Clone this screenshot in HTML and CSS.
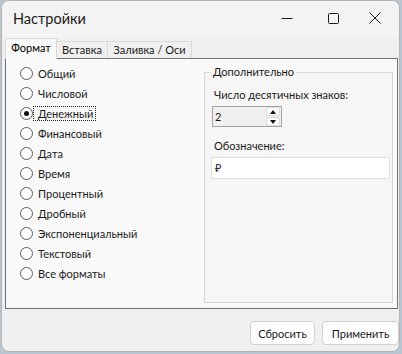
FILE: index.html
```html
<!DOCTYPE html>
<html lang="ru">
<head>
  <meta charset="UTF-8" />
  <title>Настройки</title>
  <link rel="stylesheet" href="styles.css">
</head>
<body>
  <div class="window">
    <div class="title-bar">
      <span class="title">Настройки</span>
      <div class="controls">
        <span class="ctl ctl-min">
          <svg width="12" height="12" viewBox="0 0 12 12"><path d="M0.5 6.5h11" stroke="#1a1a1a" stroke-width="1"/></svg>
        </span>
        <span class="ctl ctl-max">
          <svg width="11" height="11" viewBox="0 0 11 11"><rect x="0.5" y="0.5" width="10" height="10" rx="1" fill="none" stroke="#1a1a1a" stroke-width="1"/></svg>
        </span>
        <span class="ctl ctl-close">
          <svg width="12" height="12" viewBox="0 0 12 12"><path d="M0.5 0.5l11 11M11.5 0.5l-11 11" stroke="#1a1a1a" stroke-width="1"/></svg>
        </span>
      </div>
    </div>

    <div class="tabs">
      <div class="tab tab-format active">Формат</div>
      <div class="tab tab-insert">Вставка</div>
      <div class="tab tab-fill">Заливка / Оси</div>
    </div>

    <div class="panel">
      <ul class="formats">
        <li><span class="radio"></span><span class="label">Общий</span></li>
        <li><span class="radio"></span><span class="label">Числовой</span></li>
        <li><span class="radio checked"></span><span class="label focus">Денежный</span></li>
        <li><span class="radio"></span><span class="label">Финансовый</span></li>
        <li><span class="radio"></span><span class="label">Дата</span></li>
        <li><span class="radio"></span><span class="label">Время</span></li>
        <li><span class="radio"></span><span class="label">Процентный</span></li>
        <li><span class="radio"></span><span class="label">Дробный</span></li>
        <li><span class="radio"></span><span class="label">Экспоненциальный</span></li>
        <li><span class="radio"></span><span class="label">Текстовый</span></li>
        <li><span class="radio"></span><span class="label">Все форматы</span></li>
      </ul>

      <fieldset class="extra">
        <legend>Дополнительно</legend>
        <div class="field-label">Число десятичных знаков:</div>
        <div class="spin">
          <span class="spin-value">2</span>
          <span class="spin-buttons">
            <span class="spin-btn"><span class="arrow-up"></span></span>
            <span class="spin-btn"><span class="arrow-down"></span></span>
          </span>
        </div>
        <div class="field-label second">Обозначение:</div>
        <div class="text-box">₽</div>
      </fieldset>
    </div>

    <div class="footer">
      <button class="btn btn-reset">Сбросить</button>
      <button class="btn btn-apply">Применить</button>
    </div>
  </div>
</body>
</html>
```

FILE: styles.css
```css
body {
  margin: 0;
  background-color: #b9c6cf;
  font-family: Lato, "Noto Sans", Arial, sans-serif;
  font-size: 11px;
  color: #1a1a1a;
}

.window {
  margin-left: 1px;
  width: 399px;
  height: 352px;
  box-sizing: border-box;
  border: 1px solid #b4b4b4;
  border-radius: 8px;
  background-color: #f0f0f0;
  overflow: hidden;
}

.title-bar {
  height: 37px;
  box-sizing: border-box;
  padding-bottom: 3px;
  display: flex;
  align-items: center;
  justify-content: space-between;
  background-color: #f3f3f3;
}

.title {
  margin-left: 11px;
  font-size: 14.5px;
  color: #1c1c1c;
}

.controls {
  display: flex;
  height: 100%;
  padding-right: 5px;
}

.ctl {
  display: flex;
  align-items: center;
  justify-content: center;
  width: 46px;
  height: 100%;
}

.ctl-close {
  width: 38px;
}

.tabs {
  position: relative;
  z-index: 1;
  display: flex;
  align-items: flex-end;
  height: 21px;
  padding-left: 3px;
}

.tab {
  height: 17px;
  margin-bottom: 1px;
  line-height: 16px;
  text-align: center;
  box-sizing: border-box;
  border: 1px solid #d9d9d9;
  border-bottom: none;
  margin-left: -1px;
  background-color: #f0f0f0;
}

.tab:first-child {
  margin-left: 0;
}

.tab-format {
  width: 52px;
}

.tab-insert {
  width: 52px;
}

.tab-fill {
  width: 85px;
}

.tab.active {
  height: 21px;
  margin-bottom: 0;
  line-height: 18px;
  background-color: #f9f9f9;
  color: #000;
}

.panel {
  display: flex;
  margin: -1px 1px 0 3px;
  height: 251px;
  box-sizing: border-box;
  border: 1px solid #737373;
  background-color: #f9f9f9;
  padding: 4px 4px 0 0;
}

.formats {
  list-style: none;
  margin: 0;
  padding: 0 0 0 14px;
  width: 198px;
  flex-shrink: 0;
  box-sizing: border-box;
}

.formats li {
  display: flex;
  align-items: center;
  height: 20px;
}

.radio {
  width: 13px;
  height: 13px;
  box-sizing: border-box;
  border: 1px solid #5c5c5c;
  border-radius: 50%;
  background-color: #fdfdfd;
  display: flex;
  align-items: center;
  justify-content: center;
}

.radio.checked::after {
  content: "";
  width: 5px;
  height: 5px;
  border-radius: 50%;
  background-color: #111;
}

.label {
  padding: 0 2px 0 4px;
  line-height: 13px;
  border: 1px dotted transparent;
}

.label.focus {
  border-color: #222;
}

.extra {
  margin: 1px 0 0 0;
  min-width: 0;
  width: 189px;
  height: 239px;
  box-sizing: border-box;
  padding: 0 2px 0 6px;
  border: 1px solid #d6d6d6;
  background-color: #f6f6f6;
}

.extra legend {
  padding: 0 2px;
  line-height: 16px;
}

.field-label {
  margin-top: 7px;
  padding-left: 3px;
  line-height: 16px;
}

.field-label.second {
  margin-top: 11px;
}

.spin {
  display: flex;
  align-items: center;
  justify-content: space-between;
  width: 70px;
  height: 21px;
  margin: 3px 0 0 1px;
  box-sizing: border-box;
  border: 1px solid #a3a3a3;
  background-color: #f0f0f0;
  padding: 0 1px 0 2px;
}

.spin-buttons {
  display: flex;
  flex-direction: column;
  gap: 1px;
}

.spin-btn {
  display: flex;
  align-items: center;
  justify-content: center;
  width: 12px;
  height: 7px;
  border: 1px solid #dadada;
  border-radius: 2px;
  background-color: #fff;
}

.arrow-up {
  border-left: 3px solid transparent;
  border-right: 3px solid transparent;
  border-bottom: 4px solid #111;
}

.arrow-down {
  border-left: 3px solid transparent;
  border-right: 3px solid transparent;
  border-top: 4px solid #111;
}

.text-box {
  width: 179px;
  height: 22px;
  margin-top: 3px;
  box-sizing: border-box;
  border: 1px solid #e0e0e0;
  background-color: #fff;
  padding-left: 3px;
  line-height: 20px;
}

.footer {
  display: flex;
  justify-content: flex-end;
  gap: 7px;
  padding: 12px 0 0 0;
}

.btn {
  height: 24px;
  padding: 0;
  font-family: inherit;
  font-size: 11px;
  color: #1a1a1a;
  background-color: #fdfdfd;
  border: 1px solid #d0d0d0;
  border-radius: 4px;
}

.btn-reset {
  width: 65px;
}

.btn-apply {
  width: 77px;
}
```
